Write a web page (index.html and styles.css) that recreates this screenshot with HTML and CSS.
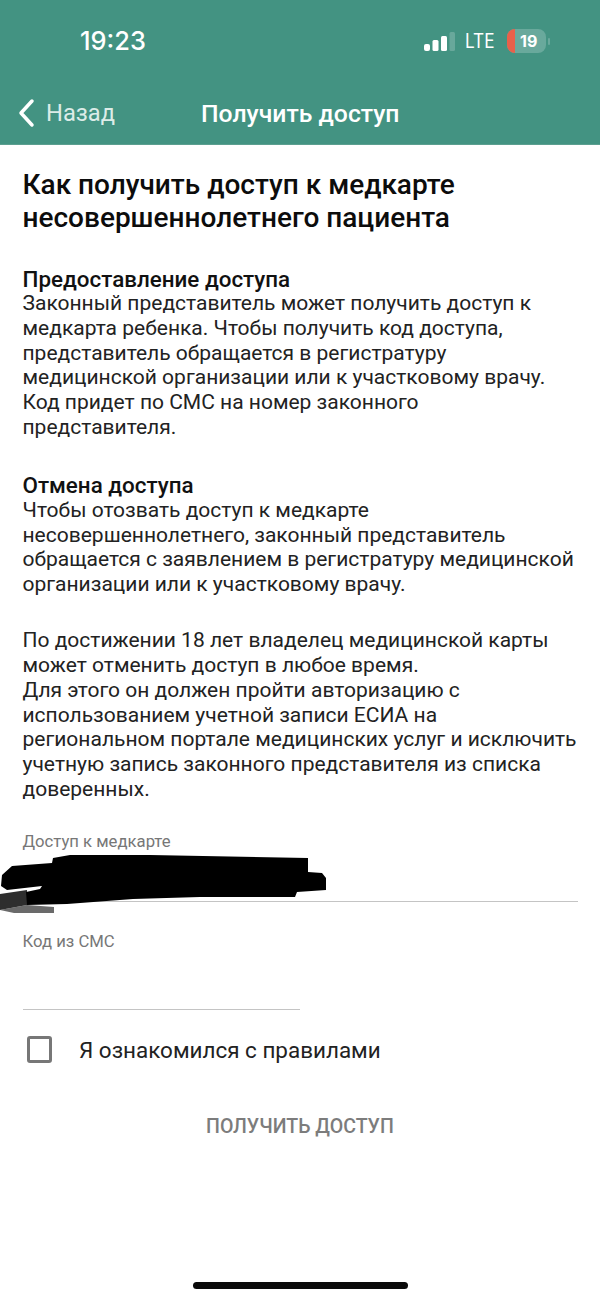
FILE: index.html
```html
<!DOCTYPE html>
<html lang="ru">
<head>
<meta charset="utf-8">
<title>Получить доступ</title>
<link rel="stylesheet" href="styles.css">
</head>
<body>
<header class="top">
  <div class="status">
    <span class="time">19:23</span>
    <div class="indicators">
      <svg class="signal" width="31" height="19" viewBox="0 0 31 19"><rect x="0" y="12" width="6" height="7" rx="2" fill="#fff"/><rect x="8.500" y="8" width="6" height="11" rx="1.500" fill="#fff"/><rect x="17" y="4" width="6" height="15" rx="1.500" fill="#fff"/><rect x="25.500" y="0" width="5.500" height="19" rx="1.500" fill="#fff" opacity=".2"/></svg>
      <span class="lte">LTE</span>
      <div class="battery"><span class="charge"></span><span class="level">19</span></div>
      <span class="nub"></span>
    </div>
  </div>
  <nav class="nav">
    <svg class="chev" width="18" height="30" viewBox="0 0 18 30"><path d="M15 3 L4 15 L15 27" fill="none" stroke="#fff" stroke-width="3.500" stroke-linecap="round" stroke-linejoin="round"/></svg>
    <span class="back">Назад</span>
    <span class="title">Получить доступ</span>
  </nav>
</header>
<main class="content">
  <h1>Как получить доступ к медкарте несовершеннолетнего пациента</h1>
  <section class="block">
    <h2>Предоставление доступа</h2>
    <p>Законный представитель может получить доступ к<br>медкарта ребенка. Чтобы получить код доступа,<br>представитель обращается в регистратуру<br>медицинской организации или к участковому врачу.<br>Код придет по СМС на номер законного<br>представителя.</p>
  </section>
  <section class="block">
    <h2>Отмена доступа</h2>
    <p>Чтобы отозвать доступ к медкарте<br>несовершеннолетнего, законный представитель<br>обращается с заявлением в регистратуру медицинской<br>организации или к участковому врачу.</p>
  </section>
  <section class="block">
    <p>По достижении 18 лет владелец медицинской карты<br>может отменить доступ в любое время.<br>Для этого он должен пройти авторизацию с<br>использованием учетной записи ЕСИА на<br>региональном портале медицинских услуг и исключить<br>учетную запись законного представителя из списка<br>доверенных.</p>
  </section>
  <div class="field field-wide">
    <span class="label">Доступ к медкарте</span>
    <svg class="scribble" width="330" height="60" viewBox="0 0 330 60"><path d="M0 55 L27 50 L54 52 L54 58 L14 58 Z" fill="#6a6a6a"/><path d="M0 39 L27 35 L27 50 L0 55 Z" fill="#2e2e2e"/><path d="M1 31 L2 20 L12 11 L52 8 L53 3 L70 0 L150 0 L308 3 L308 17 L322 18 L326 23 L326 35 L297 37 L295 42 L200 42 L133 44 L67 49 L27 50 L26 37 L40 34 L42 31 L7 35 Z" fill="#000"/></svg>
  </div>
  <div class="field field-code">
    <span class="label">Код из СМС</span>
  </div>
  <label class="agree">
    <span class="box"></span>
    <span class="agree-text">Я ознакомился с правилами</span>
  </label>
  <div class="action">ПОЛУЧИТЬ ДОСТУП</div>
</main>
<div class="home"></div>
</body>
</html>
```
FILE: styles.css
```css
* { box-sizing: border-box; }
html, body { margin: 0; padding: 0; }
body {
  width: 600px;
  height: 1300px;
  background: #fff;
  font-family: Roboto, "Liberation Sans", sans-serif;
  color: #111;
  position: relative;
  overflow: hidden;
}
.top {
  height: 145px;
  background: #439382;
  color: #fff;
  display: flex;
  flex-direction: column;
  border-bottom: 1px solid #5c9f90;
}
.status {
  height: 84px;
  display: flex;
  align-items: flex-start;
  justify-content: space-between;
  padding: 26px 50px 0 80px;
}
.time {
  font-family: Inter, sans-serif;
  font-size: 25.400px;
  line-height: 30px;
  font-weight: 500;
}
.indicators {
  display: flex;
  align-items: center;
  height: 30px;
}
.signal { margin-right: 10px; }
.lte {
  font-family: Inter, sans-serif;
  font-size: 19.500px;
  font-weight: 400;
  margin-right: 11px;
  transform: scaleX(.88);
  transform-origin: left center;
  width: 31px;
}
.battery {
  width: 39px;
  height: 24px;
  border-radius: 8px;
  background: #69a99c;
  display: flex;
  overflow: hidden;
  align-items: center;
}
.charge {
  width: 8px;
  height: 24px;
  background: #e9604a;
}
.level {
  font-family: Inter, sans-serif;
  font-size: 16px;
  font-weight: 700;
  padding-left: 5px;
}
.nub {
  width: 2px;
  height: 7px;
  margin-left: 2px;
  background: #69a99c;
  border-radius: 1px;
}
.nav {
  display: flex;
  align-items: center;
  height: 42px;
  margin-top: 8px;
  padding-left: 17px;
}
.chev { flex: none; }
.back {
  font-size: 23.700px;
  width: 155px;
  margin-left: 11px;
  color: #dcece8;
}
.title {
  font-size: 24.750px;
  font-weight: 500;
}
.content {
  padding: 24px 18px 0 22.500px;
  display: flex;
  flex-direction: column;
}
h1 {
  margin: 0 0 32.500px;
  font-size: 28px;
  line-height: 32.500px;
  font-weight: 500;
  color: #0c0c0c;
  width: 480px;
}
h2 {
  margin: 0;
  font-size: 22.400px;
  line-height: 24.600px;
  font-weight: 500;
  color: #111;
}
p {
  margin: 0;
  font-size: 21px;
  line-height: 24.700px;
  color: #222;
  white-space: nowrap;
}
.block { margin-bottom: 33px; }
.block:nth-of-type(1) { margin-bottom: 34px; }
.block:nth-of-type(2) { margin-bottom: 31.700px; }
.field {
  position: relative;
  border-bottom: 1px solid #c4c4c4;
}
.label {
  display: block;
  font-size: 16.700px;
  line-height: 20px;
  color: #777;
}
.field-wide { height: 70px; margin-top: -2.600px; width: 555.500px; }
.field-code { height: 78px; margin-top: 30px; width: 277.500px; }
.scribble {
  position: absolute;
  left: -22.500px;
  top: 23px;
}
.agree {
  display: flex;
  align-items: center;
  margin-top: 25px;
  margin-left: 4.500px;
  height: 30px;
}
.box {
  width: 25px;
  height: 27px;
  border: 3px solid #777;
  border-radius: 3px;
  flex: none;
}
.agree-text {
  margin-left: 27px;
  font-size: 22.450px;
  color: #222;
}
.action {
  margin-top: 49px;
  padding-left: 183.500px;
  font-size: 19.560px;
  line-height: 26px;
  font-weight: 500;
  color: #7c7c7c;
}
.home {
  position: absolute;
  left: 193px;
  top: 1282px;
  width: 215px;
  height: 7px;
  background: #0a0a0a;
  border-radius: 4px;
}
```
